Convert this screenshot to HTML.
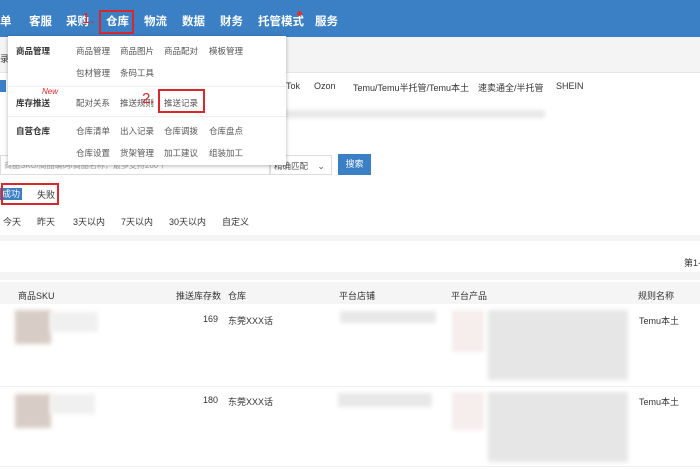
<!DOCTYPE html>
<html><head><meta charset="utf-8"><style>
*{margin:0;padding:0;box-sizing:border-box}
body{width:700px;height:470px;overflow:hidden;background:#fff;font-family:"Liberation Sans","Noto Sans CJK SC",sans-serif;font-size:9px;color:#333;position:relative}
.a{position:absolute;white-space:nowrap}
.nav{position:absolute;left:0;top:0;width:700px;height:37px;background:#3b7fc4}
.nav span{position:absolute;top:13px;color:#fff;font-size:11.5px;font-weight:bold}
.menu{position:absolute;left:8px;top:36px;width:278px;height:129px;background:#fff;box-shadow:0 1px 4px rgba(0,0,0,.3)}
.menu .a{font-size:8.5px;color:#555}
.menu b.a{font-weight:bold;color:#333}
.blur{position:absolute;background:#e8e8e8;filter:blur(2px)}
.red{position:absolute;border:2px solid #d9272e}
</style></head><body>
<div class="a" style="left:0;top:37px;width:700px;height:35px;background:#f4f4f4"></div>
<div class="a" style="left:0;top:72px;width:700px;height:1px;background:#e6e6e6"></div>
<div class="a" style="left:0;top:80px;width:6px;height:12px;background:#3b7fc4"></div>
<div class="a" style="left:0;top:52px;font-size:9px">录</div>
<div class="a" style="left:286px;top:81px;font-size:9px">Tok</div>
<div class="a" style="left:314px;top:81px;font-size:9px">Ozon</div>
<div class="a" style="left:353px;top:81px;font-size:9px">Temu/Temu半托管/Temu本土</div>
<div class="a" style="left:478px;top:81px;font-size:9px">速卖通全/半托管</div>
<div class="a" style="left:556px;top:81px;font-size:9px">SHEIN</div>
<div class="blur" style="left:280px;top:110px;width:265px;height:8px"></div>
<div class="a" style="left:0;top:155px;width:270px;height:20px;border:1px solid #ddd"></div>
<div class="a" style="left:4px;top:160px;font-size:8px;color:#aaa">商品SKU/商品编码/商品名称，最多支持200个</div>
<div class="a" style="left:270px;top:155px;width:62px;height:20px;border:1px solid #ddd"></div>
<div class="a" style="left:274px;top:160px;font-size:8.5px;color:#555">精确匹配 &nbsp;&nbsp;&nbsp;⌄</div>
<div class="a" style="left:338px;top:154px;width:33px;height:21px;background:#3b7fc4;color:#fff;font-size:9px;text-align:center;line-height:21px">搜索</div>
<div class="a" style="left:0;top:188px;width:22px;height:12px;background:#3b7fc4;color:#fff;font-size:9px;text-align:center;line-height:12px">成功</div>
<div class="a" style="left:37px;top:188px;font-size:9px">失败</div>
<div class="red" style="left:1px;top:183px;width:58px;height:22px"></div>
<div class="a" style="left:3px;top:215px">今天</div>
<div class="a" style="left:37px;top:215px">昨天</div>
<div class="a" style="left:73px;top:215px">3天以内</div>
<div class="a" style="left:121px;top:215px">7天以内</div>
<div class="a" style="left:169px;top:215px">30天以内</div>
<div class="a" style="left:222px;top:215px">自定义</div>
<div class="a" style="left:0;top:235px;width:700px;height:6px;background:#f4f4f4"></div>
<div class="a" style="left:684px;top:256px">第1-</div>
<div class="a" style="left:0;top:272px;width:700px;height:8px;background:#f4f4f4"></div>
<div class="a" style="left:0;top:282px;width:700px;height:22px;background:#f5f5f5"></div>
<div class="a" style="left:18px;top:289px;font-size:9px">商品SKU</div>
<div class="a" style="left:176px;top:289px">推送库存数</div>
<div class="a" style="left:228px;top:289px">仓库</div>
<div class="a" style="left:339px;top:289px">平台店铺</div>
<div class="a" style="left:451px;top:289px">平台产品</div>
<div class="a" style="left:638px;top:289px">规则名称</div>
<div class="blur" style="left:15px;top:310px;width:36px;height:34px;background:#d8cdc6"></div>
<div class="blur" style="left:50px;top:312px;width:48px;height:20px;background:#f0f0f0"></div>
<div class="a" style="left:203px;top:314px">169</div>
<div class="a" style="left:228px;top:314px">东莞XXX话</div>
<div class="blur" style="left:340px;top:311px;width:96px;height:12px"></div>
<div class="blur" style="left:452px;top:310px;width:32px;height:42px;background:#f6eded"></div>
<div class="blur" style="left:488px;top:310px;width:140px;height:70px;background:#e6e6e6"></div>
<div class="a" style="left:639px;top:314px">Temu本土</div>
<div class="a" style="left:0;top:386px;width:700px;height:1px;background:#eee"></div>
<div class="blur" style="left:15px;top:394px;width:36px;height:34px;background:#d8cdc6"></div>
<div class="blur" style="left:50px;top:394px;width:45px;height:20px;background:#f0f0f0"></div>
<div class="a" style="left:203px;top:395px">180</div>
<div class="a" style="left:228px;top:395px">东莞XXX话</div>
<div class="blur" style="left:338px;top:393px;width:94px;height:14px"></div>
<div class="blur" style="left:452px;top:392px;width:32px;height:38px;background:#f6eded"></div>
<div class="blur" style="left:488px;top:392px;width:140px;height:70px;background:#e6e6e6"></div>
<div class="a" style="left:639px;top:395px">Temu本土</div>
<div class="a" style="left:0;top:466px;width:700px;height:1px;background:#eee"></div>

<div class="nav">
<span style="left:0">单</span><span style="left:29px">客服</span><span style="left:66px">采购</span>
<span style="left:106px">仓库</span><span style="left:144px">物流</span><span style="left:182px">数据</span>
<span style="left:220px">财务</span><span style="left:258px">托管模式</span><span style="left:315px">服务</span>
<div class="a" style="left:297px;top:11px;width:5px;height:5px;border-radius:50%;background:#e53030"></div>
<div class="a" style="left:82px;top:10px;color:#d9272e;font-size:15px">1.</div>
<div class="red" style="left:99px;top:10px;width:35px;height:24px"></div>
</div>
<div class="menu">
<b class="a" style="left:8px;top:9px">商品管理</b>
<div class="a" style="left:68px;top:9px">商品管理</div><div class="a" style="left:112px;top:9px">商品图片</div><div class="a" style="left:156px;top:9px">商品配对</div><div class="a" style="left:201px;top:9px">模板管理</div>
<div class="a" style="left:68px;top:31px">包材管理</div><div class="a" style="left:112px;top:31px">条码工具</div>
<div class="a" style="left:0;top:50px;width:278px;height:1px;background:#eee"></div>
<div class="a" style="left:34px;top:51px;color:#d9272e;font-style:italic;font-size:8px">New</div>
<b class="a" style="left:8px;top:61px">库存推送</b>
<div class="a" style="left:68px;top:61px">配对关系</div><div class="a" style="left:112px;top:61px">推送规则</div><div class="a" style="left:156px;top:61px">推送记录</div>
<div class="a" style="left:134px;top:54px;color:#d9272e;font-size:15px">2.</div>
<div class="red" style="left:150px;top:53px;width:47px;height:24px"></div>
<div class="a" style="left:0;top:80px;width:278px;height:1px;background:#eee"></div>
<b class="a" style="left:8px;top:89px">自营仓库</b>
<div class="a" style="left:68px;top:89px">仓库清单</div><div class="a" style="left:112px;top:89px">出入记录</div><div class="a" style="left:156px;top:89px">仓库调拨</div><div class="a" style="left:201px;top:89px">仓库盘点</div>
<div class="a" style="left:68px;top:111px">仓库设置</div><div class="a" style="left:112px;top:111px">货架管理</div><div class="a" style="left:156px;top:111px">加工建议</div><div class="a" style="left:201px;top:111px">组装加工</div>
</div>
</body></html>
